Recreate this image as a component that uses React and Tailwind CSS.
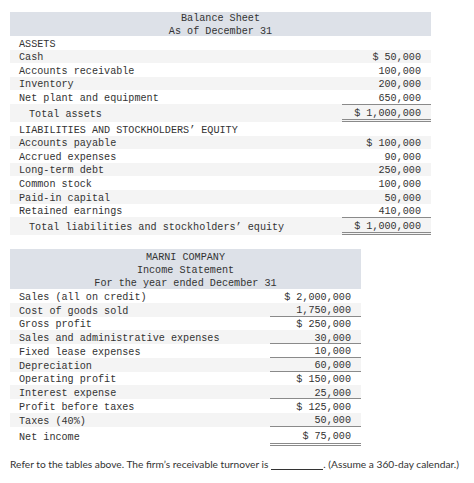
import React from "react";

const mono = { fontFamily: '"Liberation Mono", "Courier New", monospace' };

function Row({ label, value, stripe, indent, borderTop, total }) {
  return (
    <div className={`flex items-stretch ${total ? "h-[18px]" : "h-[13.6px]"} ${stripe ? "bg-[#f4f4f4]" : "bg-white"}`}>
      <div className={`flex-1 flex items-center pt-[3px] whitespace-pre ${indent ? "pl-[19px]" : "pl-[9px]"}`}>{label}</div>
      <div
        className={`w-[89px] flex items-center justify-end pt-[3px] pr-[10px] whitespace-pre ${
          borderTop ? "border-t border-[#8a8a8a]" : ""
        } ${total ? "border-b-[3px] border-double border-[#8a8a8a]" : ""}`}
      >
        {value}
      </div>
    </div>
  );
}

function IRow({ label, value, stripe, borderBottom, total }) {
  return (
    <div className={`flex items-stretch ${total ? "h-[19px]" : "h-[13.75px]"} ${stripe ? "bg-[#f4f4f4]" : "bg-white"}`}>
      <div className="flex-1 flex items-center pt-[3px] pl-[9px] whitespace-pre">{label}</div>
      <div
        className={`w-[91px] flex items-center justify-end pt-[3px] pr-[10px] whitespace-pre ${
          borderBottom ? "border-b border-[#8a8a8a]" : ""
        } ${total ? "border-b-[3px] border-double border-[#8a8a8a]" : ""}`}
      >
        {value}
      </div>
    </div>
  );
}

export default function App() {
  return (
    <div className="w-[474px] h-[483px] bg-white text-[#333] overflow-hidden">
      <div className="pt-[12px] pl-[10px]" style={mono}>
        <div className="w-[421px] text-[10.15px]">
          <div className="bg-[#dde1e8] h-[24px] pt-[3px] flex flex-col justify-center items-center leading-[12.8px]">
            <div>Balance Sheet</div>
            <div>As of December 31</div>
          </div>
          <Row label="ASSETS" />
          <Row label="Cash" value="$ 50,000" stripe />
          <Row label="Accounts receivable" value="100,000" />
          <Row label="Inventory" value="200,000" stripe />
          <Row label="Net plant and equipment" value="650,000" />
          <Row label="Total assets" value="$ 1,000,000" stripe indent borderTop total />
          <Row label="LIABILITIES AND STOCKHOLDERS’ EQUITY" />
          <Row label="Accounts payable" value="$ 100,000" stripe />
          <Row label="Accrued expenses" value="90,000" />
          <Row label="Long-term debt" value="250,000" stripe />
          <Row label="Common stock" value="100,000" />
          <Row label="Paid-in capital" value="50,000" stripe />
          <Row label="Retained earnings" value="410,000" />
          <Row label="Total liabilities and stockholders’ equity" value="$ 1,000,000" stripe indent borderTop total />
        </div>

        <div className="w-[351px] text-[10.15px] mt-[14px]">
          <div className="bg-[#dde1e8] h-[40px] pt-[3px] flex flex-col justify-center items-center leading-[13.4px]">
            <div>MARNI COMPANY</div>
            <div>Income Statement</div>
            <div>For the year ended December 31</div>
          </div>
          <IRow label="Sales (all on credit)" value="$ 2,000,000" />
          <IRow label="Cost of goods sold" value="1,750,000" stripe borderBottom />
          <IRow label="Gross profit" value="$ 250,000" />
          <IRow label="Sales and administrative expenses" value="30,000" stripe borderBottom />
          <IRow label="Fixed lease expenses" value="10,000" borderBottom />
          <IRow label="Depreciation" value="60,000" stripe borderBottom />
          <IRow label="Operating profit" value="$ 150,000" />
          <IRow label="Interest expense" value="25,000" stripe borderBottom />
          <IRow label="Profit before taxes" value="$ 125,000" />
          <IRow label="Taxes (40%)" value="50,000" stripe borderBottom />
          <IRow label="Net income" value="$ 75,000" total />
        </div>
      </div>
      <div
        className="pl-[10px] mt-[11px] text-[10.2px] text-[#333] whitespace-nowrap flex items-end"
        style={{ fontFamily: 'Lato, "Liberation Sans", Arial, sans-serif' }}
      >
        <span>Refer to the tables above. The firm’s receivable turnover is</span>
        <span className="inline-block w-[52px] h-[10px] ml-[3px] border-b border-[#333] mb-[2px]"></span>
        <span>. (Assume a 360-day calendar.)</span>
      </div>
    </div>
  );
}
